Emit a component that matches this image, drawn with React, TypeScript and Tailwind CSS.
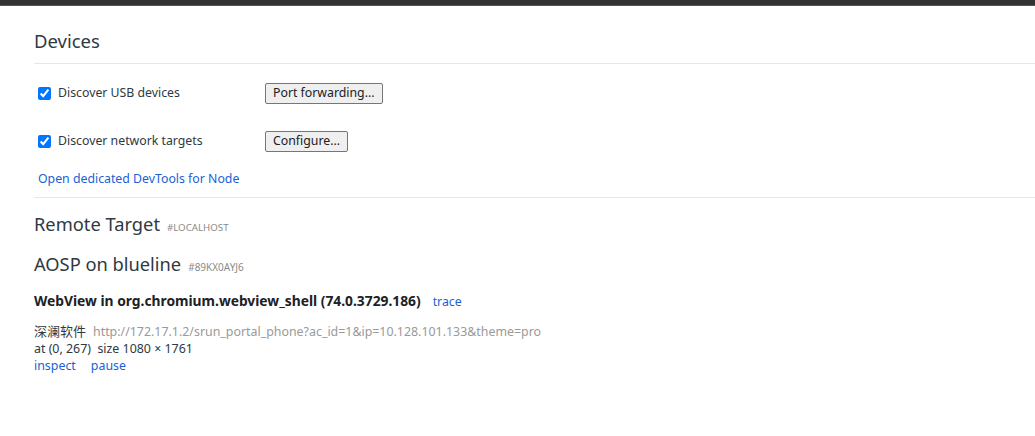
import React from 'react';

const font = { fontFamily: '"Noto Sans", "Noto Sans CJK SC", sans-serif' };

function Row({ label, button }: { label: string; button: string }) {
  return (
    <div className="flex items-center h-[22px]">
      <label className="flex items-center w-[231px] pl-[4px]">
        <input type="checkbox" defaultChecked className="w-[13px] h-[13px] m-0 accent-[#0075ff]" />
        <span className="ml-[7px] text-[12.3px] text-[#303942]">{label}</span>
      </label>
      <button className="h-[21px] px-[7px] text-[12.3px] leading-none text-[#202124] bg-[#efefef] border border-[#767676] rounded-[2px]">
        {button}
      </button>
    </div>
  );
}

export default function App() {
  return (
    <div className="w-[1035px] h-[436px] bg-white overflow-hidden text-[#303942]" style={font}>
      <div className="h-[6px] bg-[#333333] border-b border-[#555]" />
      <div className="pl-[34px]">
        <h1 className="h-[58px] pt-[21px] text-[18.5px] leading-[28px] font-normal border-b border-[#e6e6e6]">Devices</h1>
        <div className="pt-[18px]">
          <Row label="Discover USB devices" button="Port forwarding..." />
          <div className="h-[26px]" />
          <Row label="Discover network targets" button="Configure..." />
          <div className="pl-[4px] mt-[18px] text-[12.3px] leading-[18px] text-[#1a5fd6]">Open dedicated DevTools for Node</div>
        </div>
        <div className="mt-[9px] border-b border-[#e6e6e6]" />
        <div className="mt-[12px] flex items-baseline h-[28px]">
          <span className="text-[18.3px] leading-[28px]">Remote Target</span>
          <span className="ml-[7px] text-[9.7px] text-[#8a8a8a] uppercase">#localhost</span>
        </div>
        <div className="mt-[12px] flex items-baseline h-[28px]">
          <span className="text-[18.3px] leading-[28px]">AOSP on blueline</span>
          <span className="ml-[7px] text-[10px] text-[#8a8a8a]">#89KX0AYJ6</span>
        </div>
        <div className="mt-[14px] flex items-baseline text-[13.8px] leading-[18px]">
          <span className="font-bold text-[#202124]">WebView in org.chromium.webview_shell (74.0.3729.186)</span>
          <span className="ml-[12px] text-[12.3px] text-[#1a5fd6]">trace</span>
        </div>
        <div className="mt-[12px] text-[12.4px] leading-[17px]">
          <div className="flex items-baseline">
            <span className="text-[13px]">深澜软件</span>
            <span className="ml-[7px] text-[#9a9a9a]">http://172.17.1.2/srun_portal_phone?ac_id=1&amp;ip=10.128.101.133&amp;theme=pro</span>
          </div>
          <div>at (0, 267)&nbsp; size 1080 × 1761</div>
          <div className="flex gap-[15px] text-[#1a5fd6]">
            <span>inspect</span>
            <span>pause</span>
          </div>
        </div>
      </div>
    </div>
  );
}
